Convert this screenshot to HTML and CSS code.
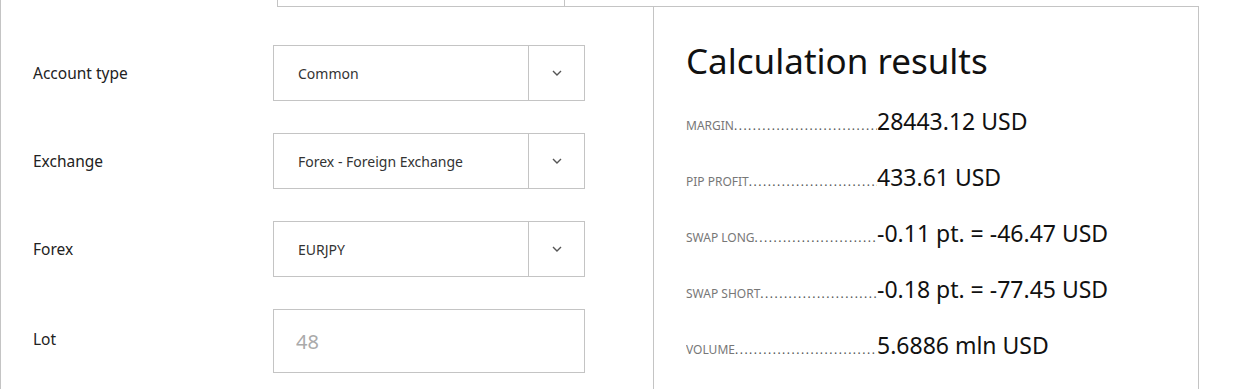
FILE: index.html
```html
<!DOCTYPE html>
<html lang="en">

<head>
  <meta charset="UTF-8">
  <meta name="viewport" content="width=device-width, initial-scale=1.0">
  <title>Margin calculator</title>
  <link rel="stylesheet" href="styles.css">
</head>

<body>
  <div class="calc">
    <div class="calc__tabs">
      <div class="calc__tab"></div>
      <div class="calc__tab calc__tab--rest"></div>
    </div>

    <div class="calc__main">
      <form class="calc__form">
        <div class="field">
          <label class="field__label">Account type</label>
          <div class="select">
            <span class="select__value">Common</span>
            <span class="select__arrow">
              <svg width="10" height="6" viewBox="0 0 10 6"><path d="M1 1l4 4 4-4" fill="none" stroke="#555" stroke-width="1.4"/></svg>
            </span>
          </div>
        </div>

        <div class="field">
          <label class="field__label">Exchange</label>
          <div class="select">
            <span class="select__value">Forex - Foreign Exchange</span>
            <span class="select__arrow">
              <svg width="10" height="6" viewBox="0 0 10 6"><path d="M1 1l4 4 4-4" fill="none" stroke="#555" stroke-width="1.4"/></svg>
            </span>
          </div>
        </div>

        <div class="field">
          <label class="field__label">Forex</label>
          <div class="select">
            <span class="select__value">EURJPY</span>
            <span class="select__arrow">
              <svg width="10" height="6" viewBox="0 0 10 6"><path d="M1 1l4 4 4-4" fill="none" stroke="#555" stroke-width="1.4"/></svg>
            </span>
          </div>
        </div>

        <div class="field field--lot">
          <label class="field__label">Lot</label>
          <input class="input" type="text" placeholder="48">
        </div>
      </form>

      <div class="results">
        <h2 class="results__title">Calculation results</h2>
        <ul class="results__list">
          <li class="results__row">
            <span class="results__name">MARGIN</span>
            <span class="results__value">28443.12 USD</span>
          </li>
          <li class="results__row">
            <span class="results__name">PIP PROFIT</span>
            <span class="results__value">433.61 USD</span>
          </li>
          <li class="results__row">
            <span class="results__name">SWAP LONG</span>
            <span class="results__value">-0.11 pt. = -46.47 USD</span>
          </li>
          <li class="results__row">
            <span class="results__name">SWAP SHORT</span>
            <span class="results__value">-0.18 pt. = -77.45 USD</span>
          </li>
          <li class="results__row">
            <span class="results__name">VOLUME</span>
            <span class="results__value">5.6886 mln USD</span>
          </li>
        </ul>
      </div>
    </div>
  </div>
</body>

</html>
```

FILE: styles.css
```css
body {
  margin: 0;
  font-family: "Noto Sans", "Open Sans", sans-serif;
  color: #222;
  background: #fff;
}

.calc {
  width: 1198px;
  height: 389px;
  border-left: 1px solid #c4c4c4;
  overflow: hidden;
}

.calc__tabs {
  display: flex;
  height: 6px;
  margin-left: 276px;
  border-bottom: 1px solid #c4c4c4;
}

.calc__tab {
  width: 286px;
  border-left: 1px solid #c4c4c4;
  border-right: 1px solid #c4c4c4;
}

.calc__tab--rest {
  flex: 1;
  border: none;
}

.calc__main {
  display: flex;
}

.calc__form {
  width: 652px;
  padding: 38px 0 0 32px;
  box-sizing: border-box;
}

.field {
  display: flex;
  align-items: center;
  margin-bottom: 32px;
}

.field--lot .field__label {
  margin-top: -4px;
}

.field__label {
  width: 240px;
  font-size: 15.5px;
  color: #222;
}

.select {
  display: flex;
  width: 312px;
  height: 56px;
  border: 1px solid #c4c4c4;
  box-sizing: border-box;
}

.select__value {
  flex: 1;
  display: flex;
  align-items: center;
  padding-left: 24px;
  font-size: 14px;
  color: #333;
}

.select__arrow {
  width: 55px;
  display: flex;
  align-items: center;
  justify-content: center;
  border-left: 1px solid #c4c4c4;
}

.input {
  width: 312px;
  height: 64px;
  border: 1px solid #c4c4c4;
  box-sizing: border-box;
  padding: 0 0 0 22px;
  font-family: inherit;
  font-size: 20px;
  outline: none;
}

.input::placeholder {
  color: #aaa;
}

.results {
  flex: 1;
  height: 383px;
  border-left: 1px solid #c4c4c4;
  border-right: 1px solid #c4c4c4;
  padding: 0 0 0 32px;
}

.results__title {
  margin: 32px 0 0;
  font-size: 35px;
  font-weight: 400;
  color: #111;
  line-height: 44px;
}

.results__list {
  margin: 22px 0 0;
  padding: 0;
  list-style: none;
}

.results__row {
  display: flex;
  align-items: baseline;
  height: 56px;
}

.results__name {
  width: 191px;
  flex-shrink: 0;
  overflow: hidden;
  white-space: nowrap;
  font-size: 12px;
  color: #777;
}

.results__name::after {
  content: "...................................................................................";
  letter-spacing: 1.5px;
  color: #555;
}

.results__value {
  font-size: 23px;
  color: #111;
  white-space: nowrap;
}
```
